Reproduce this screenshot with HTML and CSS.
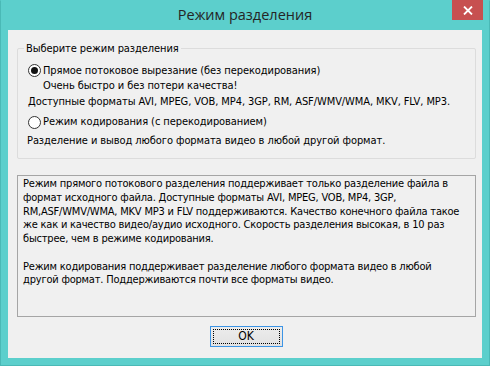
FILE: index.html
```html
<!DOCTYPE html>
<html lang="ru">
<head>
<meta charset="utf-8">
<title>Режим разделения</title>
<link rel="stylesheet" href="styles.css">
</head>
<body>
<div class="window">
  <div class="titlebar">
    <div class="spacer"></div>
    <div class="title">Режим разделения</div>
    <div class="tb-right">
      <div class="close">
        <svg width="10" height="9" viewBox="0 0 10 9"><path d="M1 0.5 L9 8.5 M9 0.5 L1 8.5" stroke="#fff" stroke-width="1.8"/></svg>
      </div>
    </div>
  </div>
  <div class="client">
    <div class="group">
      <span class="group-title">Выберите режим разделения</span>
      <div class="row r1"><span class="radio checked"></span><span>Прямое потоковое вырезание (без перекодирования)</span></div>
      <div class="row r2 indent">Очень быстро и без потери качества!</div>
      <div class="row r3">Доступные форматы AVI, MPEG, VOB, MP4, 3GP, RM, ASF/WMV/WMA, MKV, FLV, MP3.</div>
      <div class="row r4"><span class="radio"></span><span>Режим кодирования (с перекодированием)</span></div>
      <div class="row r5">Разделение и вывод любого формата видео в любой другой формат.</div>
    </div>
    <div class="info">
      <p>Режим прямого потокового разделения поддерживает только разделение файла в<br>формат исходного файла. Доступные форматы AVI, MPEG, VOB, MP4, 3GP,<br>RM,ASF/WMV/WMA, MKV MP3 и FLV поддерживаются. Качество конечного файла такое<br>же как и качество видео/аудио исходного. Скорость разделения высокая, в 10 раз<br>быстрее, чем в режиме кодирования.</p>
      <p>Режим кодирования поддерживает разделение любого формата видео в любой<br>другой формат. Поддерживаются почти все форматы видео.</p>
    </div>
    <div class="buttons">
      <button class="btn"><span class="focus">OK</span></button>
    </div>
  </div>
</div>
</body>
</html>
```
FILE: styles.css
```css
html, body {
  margin: 0;
  padding: 0;
}
body {
  width: 490px;
  height: 366px;
  overflow: hidden;
  background: #5ccfcc;
}
.window {
  box-sizing: border-box;
  width: 490px;
  height: 366px;
  background: #5ccfcc;
  border: 1px solid #4ab9b6;
  border-top-color: #5ccfcc;
  display: flex;
  flex-direction: column;
}
.titlebar {
  height: 29px;
  display: grid;
  grid-template-columns: 1fr auto 1fr;
  align-items: start;
}
.title {
  font-family: "Open Sans", "Noto Sans", sans-serif;
  font-size: 14.5px;
  color: #252525;
  line-height: 18px;
  padding-top: 5px;
}
.tb-right {
  display: flex;
  justify-content: flex-end;
  padding-right: 6px;
}
.close {
  width: 31px;
  height: 20px;
  margin-top: -1px;
  background: #c75050;
  display: flex;
  align-items: center;
  justify-content: center;
}
.client {
  box-sizing: border-box;
  margin: 0 7px 7px 7px;
  height: 328px;
  background: #f0f0f0;
  font-family: "DejaVu Sans Condensed", "DejaVu Sans", sans-serif;
  font-stretch: condensed;
  font-size: 11px;
  color: #000;
  padding: 18px 6px 0 9px;
  display: flex;
  flex-direction: column;
}
.group {
  position: relative;
  box-sizing: border-box;
  height: 111px;
  border: 1px solid #dcdcdc;
  border-radius: 2px;
  padding: 14px 0 0 10px;
  letter-spacing: -0.08px;
}
.group-title {
  position: absolute;
  left: 6px;
  top: -8px;
  padding: 0 2px;
  background: #f0f0f0;
  line-height: 16px;
}
.row {
  display: flex;
  align-items: center;
  height: 16px;
  line-height: 16px;
  white-space: nowrap;
}
.r1 { margin-left: 0; height: 15px; }
.r2 { margin-left: 15px; }
.r3 { margin-left: 0; }
.r4 { margin-top: 4px; }
.r5 { margin-top: 3px; margin-left: -1px; }
.radio {
  box-sizing: border-box;
  width: 13px;
  height: 13px;
  border: 1px solid #333;
  border-radius: 50%;
  background: #fff;
  margin-right: 2px;
  display: flex;
  align-items: center;
  justify-content: center;
}
.radio.checked::after {
  content: "";
  width: 7px;
  height: 7px;
  border-radius: 50%;
  background: #111;
}
.info {
  box-sizing: border-box;
  margin-top: 16px;
  height: 142px;
  border: 1px solid #a5a5a5;
  padding: 1px 5px 0 5px;
  line-height: 13.75px;
  letter-spacing: -0.2px;
  white-space: nowrap;
}
.info p {
  margin: 0 0 13.75px 0;
}
.buttons {
  display: flex;
  justify-content: center;
  padding-top: 9px;
  padding-right: 1px;
}
.btn {
  box-sizing: border-box;
  width: 73px;
  height: 21px;
  padding: 2px;
  border: 1px solid #3c94e5;
  background: linear-gradient(#ececec, #e2e2e2);
  font-family: "DejaVu Sans Condensed", "DejaVu Sans", sans-serif;
  font-stretch: condensed;
  font-size: 12px;
  color: #000;
  display: flex;
}
.focus {
  flex: 1;
  border: 1px dotted #000;
  display: flex;
  align-items: center;
  justify-content: center;
  line-height: 13px;
}
```
